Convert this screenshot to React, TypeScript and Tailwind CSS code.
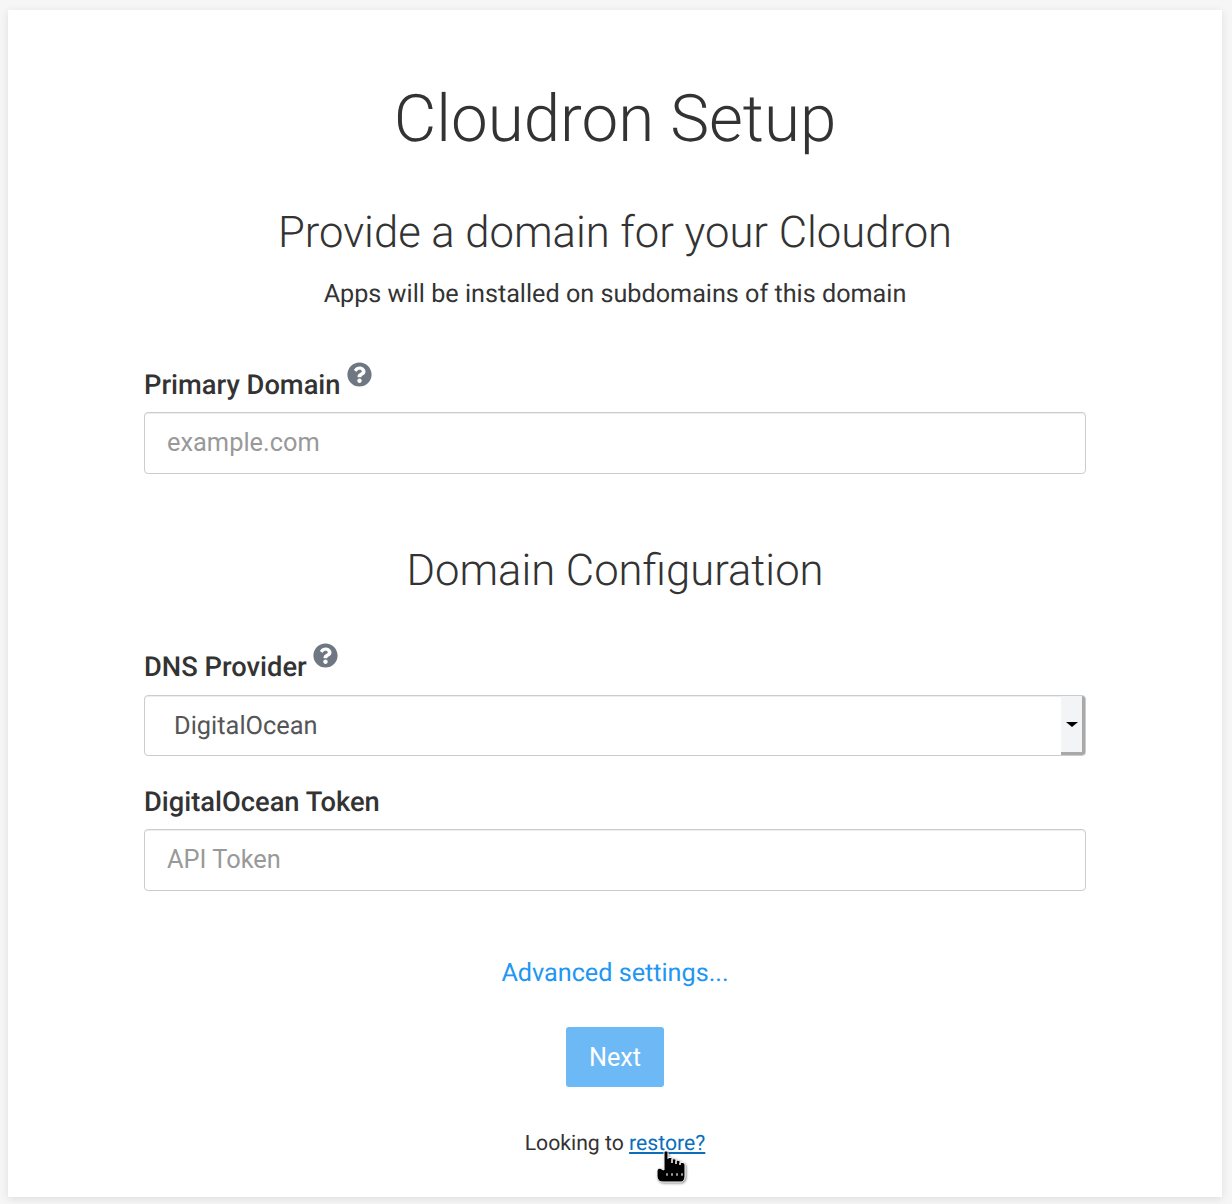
import { FaQuestionCircle } from "react-icons/fa";

const HandCursor = () => (
  <svg width="38" height="38" viewBox="0 0 38 38" className="absolute left-[26px] top-[21px]">
    <path
      d="M9 4.5C9 2.5 13 2.5 13 4.5V10.5C13 9 17 9 17 10.5V15V11.5C17 10.5 21 10.5 21 12V16V13C21 12 25 12 25 13.5V17V15C25 14 30 14 30 17V28C30 31 28.5 34 26 34H8C4 34 2 31 2 28V23C2 21 4 20 5.5 20.5L9 22Z"
      fill="#000"
      stroke="#fff"
      strokeWidth="1"
      style={{ filter: "drop-shadow(1px 1px 1px rgba(0,0,0,.45))" }}
    />
    <path d="M12 26v1M17 26v1M22 26v1M27 26v1" stroke="#999" strokeWidth="2" strokeLinecap="round" fill="none" />
  </svg>
);

const FieldLabel = ({ text, help }: { text: string; help?: string }) => (
  <div className="flex items-start h-[34px] text-[27.3px] font-medium leading-[34px] text-[#333]">
    <span>{text}</span>
    {help && <FaQuestionCircle size={25} className={`ml-[6px] text-[#6f7882] ${help}`} />}
  </div>
);

const TextInput = ({ placeholder }: { placeholder: string }) => (
  <input
    readOnly
    placeholder={placeholder}
    className="block w-full h-[62px] px-[22px] pb-[2px] bg-white border border-[#ccc] rounded-[4px] text-[25.4px] text-[#555] placeholder:text-[#999] shadow-[inset_0_1px_1px_rgba(0,0,0,0.075)] outline-none"
  />
);

export default function App() {
  return (
    <div className="min-h-[1204px] bg-[#f6f6f6] pt-[10px] pl-[8px] pr-[10px] pb-[7px] font-['Roboto',sans-serif] text-[#333] [text-rendering:geometricPrecision]">
      <div className="h-[1187px] bg-white shadow-[0_2px_8px_rgba(0,0,0,0.1)]">
        <div className="w-[942px] ml-[136px] flex flex-col">
          <h1 className="mt-[71px] text-center text-[65.5px] font-light leading-[76px] text-[#333]">Cloudron Setup</h1>
          <h2 className="mt-[49px] text-center text-[43.6px] font-light leading-[54px]">Provide a domain for your Cloudron</h2>
          <p className="mt-[17px] text-center text-[25.2px] leading-[36px]">Apps will be installed on subdomains of this domain</p>

          <div className="mt-[55px]">
            <FieldLabel text="Primary Domain" help="mt-[-6px]" />
          </div>
          <div className="mt-[10px]">
            <TextInput placeholder="example.com" />
          </div>

          <h2 className="mt-[70px] text-center text-[43.6px] font-light leading-[54px]">Domain Configuration</h2>

          <div className="mt-[52px]">
            <FieldLabel text="DNS Provider" help="mt-[-7px]" />
          </div>
          <div className="mt-[11px] relative flex h-[61px] bg-white border border-[#ccc] rounded-[4px] shadow-[inset_0_1px_1px_rgba(0,0,0,0.075)]">
            <span className="flex-1 pl-[29px] text-[25.4px] leading-[60px] text-[#555]">DigitalOcean</span>
            <div className="w-[24px] flex items-center justify-center bg-[#f3f4f6] border-r-[3px] border-b-[3px] border-[#a9a9a9] rounded-r-[3px]">
              <div className="w-0 h-0 border-x-[6px] border-x-transparent border-t-[5px] border-t-black" />
            </div>
          </div>

          <div className="mt-[29px]">
            <FieldLabel text="DigitalOcean Token" />
          </div>
          <div className="mt-[10px]">
            <TextInput placeholder="API Token" />
          </div>

          <a className="mt-[65px] text-center text-[25.2px] leading-[36px] text-[#2196f3]">Advanced settings...</a>

          <button className="mt-[35px] mx-auto w-[98px] h-[60px] pt-[1px] bg-[#6db9f6] text-white text-[25.2px] rounded-[3px]">Next</button>

          <p className="mt-[40px] text-center text-[21.2px] leading-[34px] text-[#333]">
            Looking to{" "}
            <span className="relative inline-block">
              <a className="text-[#0a6ebd] underline">restore?</a>
              <HandCursor />
            </span>
          </p>
        </div>
      </div>
    </div>
  );
}
